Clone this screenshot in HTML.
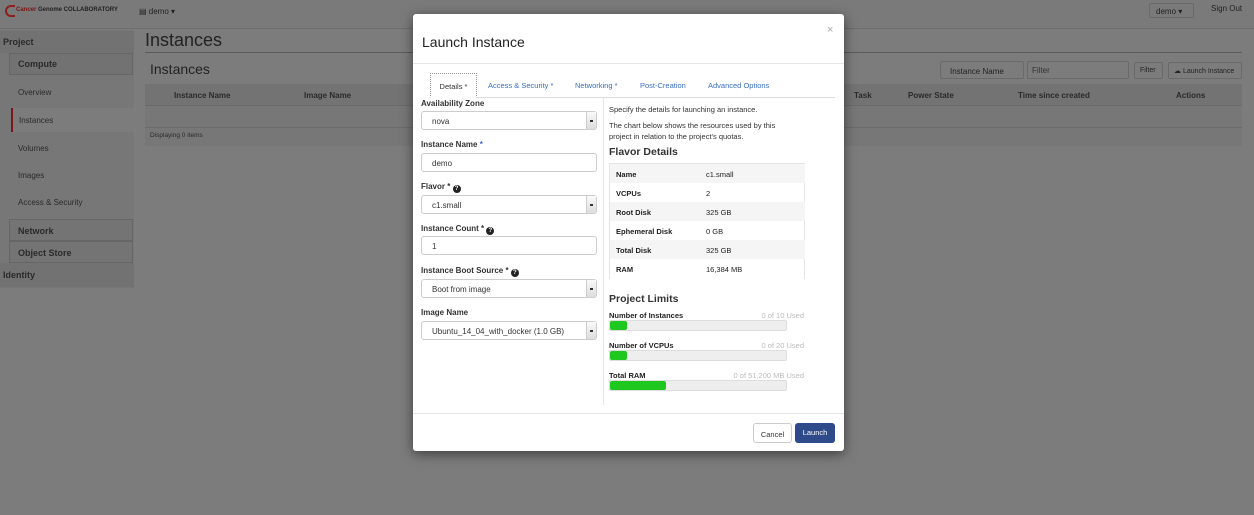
<!DOCTYPE html>
<html><head><style>
*{box-sizing:border-box;margin:0;padding:0}
body{width:1254px;height:515px;background:#7c7c7c;font-family:"Liberation Sans",sans-serif;position:relative;overflow:hidden;color:#222}
.a{position:absolute}
.sb{color:#2a2a2a;font-size:9px}
.m{position:absolute;left:413px;top:14px;width:431px;height:437px;background:#fff;border-radius:3px;box-shadow:0 3px 12px rgba(0,0,0,.5)}
.lbl{position:absolute;left:8px;font-size:8px;font-weight:bold;color:#333}
.inp{position:absolute;left:8px;width:176px;height:19px;border:1px solid #ccc;border-radius:3px;font-size:8px;padding:5px 10px;color:#333;background:#fff}
.sel::after{content:"";position:absolute;right:0;top:0;width:9px;height:17px;border-left:1px solid #ccc;background:linear-gradient(#fafafa,#ddd)}
.sel::before{content:"";position:absolute;right:3px;top:8px;width:3px;height:2px;background:#333;z-index:1}
.q{display:inline-block;width:8px;height:8px;border-radius:50%;background:#222;color:#fff;font-size:6px;text-align:center;line-height:8px;vertical-align:-1px}
.fr{position:absolute;left:0;width:195px;height:19px;font-size:7.5px;padding:6px 6px}
.fr b{display:inline-block;width:90px}
.bar{position:absolute;left:196px;width:178px;height:11px;background:#eee;border:1px solid #ddd;border-radius:2px}
.bar i{position:absolute;left:0;top:0;height:9px;background:#1ec81e;border-radius:2px}
.pl{position:absolute;left:196px;width:195px;font-size:7.5px;font-weight:bold}
.pl span{float:right;font-weight:normal;color:#bbb}
</style></head><body>
<div class="a" style="left:0;top:0;width:1254px;height:29px;background:#7a7a7a;border-bottom:1px solid #6e6e6e"></div>
<div class="a" style="left:5px;top:5px;width:10px;height:12px;border:2px solid #8b2020;border-right:none;border-radius:8px 0 0 8px"></div>
<div class="a" style="left:16px;top:7px;font-size:6px;font-weight:bold;color:#222"><span style="color:#7a1414">Cancer</span> Genome COLLABORATORY</div>
<div class="a" style="left:139px;top:7px;font-size:8px;color:#222">▤ demo ▾</div>
<div class="a" style="left:1149px;top:3px;width:45px;height:15px;border:1px solid #6a6a6a;border-radius:2px;font-size:8px;padding:3px 6px;color:#222">demo ▾</div>
<div class="a" style="left:1211px;top:4px;font-size:8px;color:#222">Sign Out</div>
<!-- sidebar -->
<div class="a" style="left:0;top:30px;width:134px;height:258px;background:#777"></div>
<div class="a" style="left:0;top:31px;width:134px;height:22px;background:#727272"></div>
<div class="a sb" style="left:3px;top:37px;font-weight:bold">Project</div>
<div class="a" style="left:9px;top:53px;width:124px;height:22px;border:1px solid #666;background:#727272"></div>
<div class="a sb" style="left:18px;top:59px;font-weight:bold">Compute</div>
<div class="a sb" style="left:18px;top:88px;font-size:8px">Overview</div>
<div class="a" style="left:11px;top:108px;width:130px;height:24px;background:#7c7c7c;border-left:2px solid #7a1818"></div>
<div class="a sb" style="left:19px;top:116px;font-size:8px">Instances</div>
<div class="a sb" style="left:18px;top:144px;font-size:8px">Volumes</div>
<div class="a sb" style="left:18px;top:171px;font-size:8px">Images</div>
<div class="a sb" style="left:18px;top:198px;font-size:8px">Access &amp; Security</div>
<div class="a" style="left:9px;top:219px;width:124px;height:22px;border:1px solid #666;background:#747474"></div>
<div class="a sb" style="left:18px;top:226px;font-weight:bold">Network</div>
<div class="a" style="left:9px;top:241px;width:124px;height:22px;border:1px solid #666;background:#747474"></div>
<div class="a sb" style="left:18px;top:248px;font-weight:bold">Object Store</div>
<div class="a" style="left:0;top:263px;width:134px;height:24px;background:#727272"></div>
<div class="a sb" style="left:3px;top:270px;font-weight:bold">Identity</div>
<!-- main -->
<div class="a" style="left:145px;top:30px;font-size:18px;color:#222">Instances</div>
<div class="a" style="left:145px;top:52px;width:1097px;height:1px;background:#5a5a5a"></div>
<div class="a" style="left:150px;top:61px;font-size:14px;color:#222">Instances</div>
<div class="a" style="left:940px;top:61px;width:84px;height:18px;border:1px solid #6a6a6a;border-radius:2px;font-size:8px;padding:5px 9px;color:#222">Instance Name</div>
<div class="a" style="left:1027px;top:61px;width:102px;height:18px;border:1px solid #6a6a6a;border-radius:2px;font-size:8px;padding:4px 4px;color:#333">Filter</div>
<div class="a" style="left:1134px;top:62px;width:29px;height:17px;border:1px solid #6a6a6a;border-radius:2px;font-size:7px;padding:4px 5px">Filter</div>
<div class="a" style="left:1168px;top:62px;width:74px;height:17px;border:1px solid #6a6a6a;border-radius:2px;font-size:7px;padding:4px 5px">☁ Launch Instance</div>
<div class="a" style="left:145px;top:84px;width:1097px;height:62px;background:#777"></div>
<div class="a" style="left:145px;top:84px;width:1097px;height:22px;background:#737373;border-bottom:1px solid #6a6a6a"></div>
<div class="a" style="left:145px;top:127px;width:1097px;height:1px;background:#6c6c6c"></div>
<div class="a sb" style="left:174px;top:91px;font-weight:bold;font-size:8px">Instance Name</div>
<div class="a sb" style="left:304px;top:91px;font-weight:bold;font-size:8px">Image Name</div>
<div class="a sb" style="left:854px;top:91px;font-weight:bold;font-size:8px">Task</div>
<div class="a sb" style="left:908px;top:91px;font-weight:bold;font-size:8px">Power State</div>
<div class="a sb" style="left:1018px;top:91px;font-weight:bold;font-size:8px">Time since created</div>
<div class="a sb" style="left:1176px;top:91px;font-weight:bold;font-size:8px">Actions</div>
<div class="a sb" style="left:150px;top:132px;font-size:6.5px">Displaying 0 items</div>
<!-- modal -->
<div class="m">
<div class="a" style="left:9px;top:20px;font-size:14px;color:#222">Launch Instance</div>
<div class="a" style="left:414px;top:10px;font-size:11px;color:#aaa">×</div>
<div class="a" style="left:0;top:49px;width:431px;height:1px;background:#e5e5e5"></div>
<div class="a" style="left:17px;top:59px;width:47px;height:25px;border:1px dotted #999;border-bottom:none;background:#fff;font-size:7.5px;padding:8px 0;text-align:center;color:#333">Details *</div>
<div class="a" style="left:17px;top:83px;width:405px;height:1px;background:#ddd"></div>
<div class="a" style="left:18px;top:83px;width:45px;height:1px;background:#fff"></div>
<div class="a" style="left:75px;top:67px;font-size:7.5px;color:#3a6fc4">Access &amp; Security *</div>
<div class="a" style="left:162px;top:67px;font-size:7.5px;color:#3a6fc4">Networking *</div>
<div class="a" style="left:227px;top:67px;font-size:7.5px;color:#3a6fc4">Post-Creation</div>
<div class="a" style="left:295px;top:67px;font-size:7.5px;color:#3a6fc4">Advanced Options</div>
<div class="lbl" style="top:85px">Availability Zone</div>
<div class="inp sel" style="top:97px">nova</div>
<div class="lbl" style="top:126px">Instance Name <span style="color:#3a6fc4">*</span></div>
<div class="inp" style="top:139px">demo</div>
<div class="lbl" style="top:168px">Flavor * <span class="q">?</span></div>
<div class="inp sel" style="top:181px">c1.small</div>
<div class="lbl" style="top:210px">Instance Count * <span class="q">?</span></div>
<div class="inp" style="top:222px">1</div>
<div class="lbl" style="top:252px">Instance Boot Source * <span class="q">?</span></div>
<div class="inp sel" style="top:265px">Boot from image</div>
<div class="lbl" style="top:294px">Image Name</div>
<div class="inp sel" style="top:307px">Ubuntu_14_04_with_docker (1.0 GB)</div>
<div class="a" style="left:190px;top:84px;width:1px;height:307px;background:#e5e5e5"></div>
<div class="a" style="left:196px;top:90px;font-size:7.5px;color:#333;line-height:11px;width:190px">Specify the details for launching an instance.</div>
<div class="a" style="left:196px;top:106px;font-size:7.5px;color:#333;line-height:11px;width:190px">The chart below shows the resources used by this project in relation to the project's quotas.</div>
<div class="a" style="left:196px;top:132px;font-size:10.5px;font-weight:bold;color:#333">Flavor Details</div>
<div class="a" style="left:196px;top:149px;width:196px;height:116px;border:1px solid #e5e5e5;border-bottom:none">
<div class="fr" style="top:0;background:#f5f5f5"><b>Name</b>c1.small</div>
<div class="fr" style="top:19px"><b>VCPUs</b>2</div>
<div class="fr" style="top:38px;background:#f5f5f5"><b>Root Disk</b>325 GB</div>
<div class="fr" style="top:57px"><b>Ephemeral Disk</b>0 GB</div>
<div class="fr" style="top:76px;background:#f5f5f5"><b>Total Disk</b>325 GB</div>
<div class="fr" style="top:95px"><b>RAM</b>16,384 MB</div>
</div>
<div class="a" style="left:196px;top:279px;font-size:10.5px;font-weight:bold;color:#333">Project Limits</div>
<div class="pl" style="top:297px">Number of Instances<span>0 of 10 Used</span></div>
<div class="bar" style="top:306px"><i style="width:17px"></i></div>
<div class="pl" style="top:327px">Number of VCPUs<span>0 of 20 Used</span></div>
<div class="bar" style="top:336px"><i style="width:17px"></i></div>
<div class="pl" style="top:357px">Total RAM<span>0 of 51,200 MB Used</span></div>
<div class="bar" style="top:366px"><i style="width:56px"></i></div>
<div class="a" style="left:0;top:399px;width:431px;height:1px;background:#e5e5e5"></div>
<div class="a" style="left:340px;top:409px;width:39px;height:20px;border:1px solid #ccc;border-radius:3px;font-size:7.5px;text-align:center;padding-top:6px;color:#333">Cancel</div>
<div class="a" style="left:382px;top:409px;width:40px;height:20px;background:#2f4a8a;border-radius:3px;font-size:7.5px;text-align:center;padding-top:5px;color:#fff">Launch</div>
</div>
</body></html>
